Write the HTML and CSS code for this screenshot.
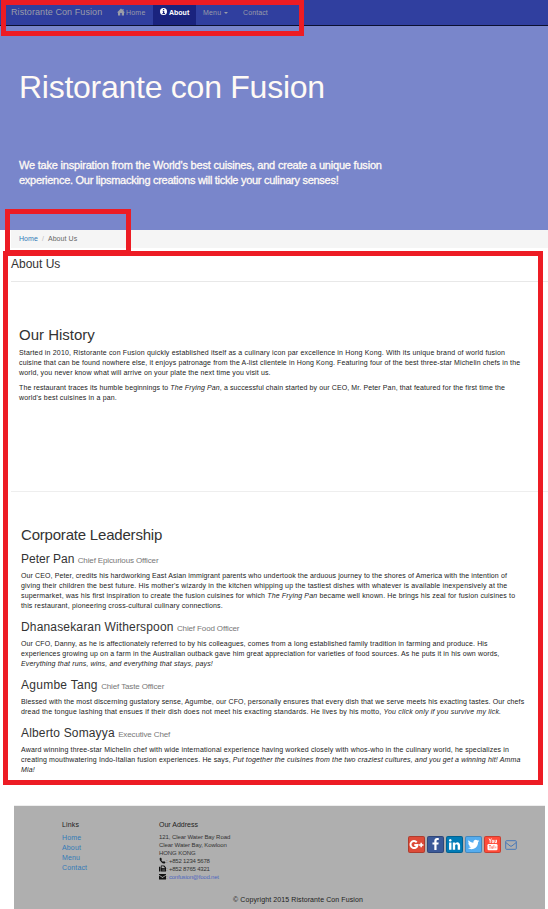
FILE: index.html
```html
<!DOCTYPE html>
<html lang="en">
<head>
<meta charset="utf-8">
<title>Ristorante Con Fusion: About Us</title>
<link rel="stylesheet" href="styles.css">
</head>
<body>
<nav class="navbar">
  <a class="brand">Ristorante Con Fusion</a>
  <a class="nav-home"><svg class="ic-home" viewBox="0 0 16 16"><path d="M8 1 0 9h2v6h4.500v-5h3v5H14V9h2l-3-3V2h-2v2z"/></svg>Home</a>
  <a class="nav-about"><svg class="ic-info" viewBox="0 0 14 14"><path fill-rule="evenodd" d="M7 0a7 7 0 1 0 0 14A7 7 0 0 0 7 0zM6 2h2.500v2.200H6zM5 5.500h3.500V10H10v1.800H4.800V10H6V7.200H5z"/></svg>About</a>
  <a class="nav-menu">Menu<i class="caret"></i></a>
  <a class="nav-contact">Contact</a>
</nav>
<header class="hero">
  <h1>Ristorante con Fusion</h1>
  <p><span class="s1">We take inspiration from the World's best cuisines, and create a unique fusion</span><br><span class="s2">experience. Our lipsmacking creations will tickle your culinary senses!</span></p>
</header>
<main>
  <div class="breadcrumb"><a>Home</a><i>/</i><span>About Us</span></div>
  <h3 class="title">About Us</h3>
  <section class="history">
    <h2>Our History</h2>
    <p><span class="t5">Started in 2010, Ristorante con Fusion quickly established itself as a culinary icon par excellence in Hong Kong. With its unique brand of world fusion</span><br><span class="t2">cuisine that can be found nowhere else, it enjoys patronage from the A-list clientele in Hong Kong. Featuring four of the best three-star Michelin chefs in the</span><br><span class="t3">world, you never know what will arrive on your plate the next time you visit us.</span></p>
    <p><span class="t1">The restaurant traces its humble beginnings to <em>The Frying Pan</em>, a successful chain started by our CEO, Mr. Peter Pan, that featured for the first time the</span><br><span class="t5">world's best cuisines in a pan.</span></p>
  </section>
  <section class="leaders">
    <h2>Corporate Leadership</h2>
    <h3>Peter Pan <small>Chief Epicurious Officer</small></h3>
    <p><span class="t1">Our CEO, Peter, credits his hardworking East Asian immigrant parents who undertook the arduous journey to the shores of America with the intention of</span><br><span class="t5">giving their children the best future. His mother's wizardy in the kitchen whipping up the tastiest dishes with whatever is available inexpensively at the</span><br><span class="t4">supermarket, was his first inspiration to create the fusion cuisines for which <em>The Frying Pan</em> became well known. He brings his zeal for fusion cuisines to</span><br><span class="t4">this restaurant, pioneering cross-cultural culinary connections.</span></p>
    <h3><span class="n1">Dhanasekaran Witherspoon</span> <small>Chief Food Officer</small></h3>
    <p><span class="t3">Our CFO, Danny, as he is affectionately referred to by his colleagues, comes from a long established family tradition in farming and produce. His</span><br><span class="t3">experiences growing up on a farm in the Australian outback gave him great appreciation for varieties of food sources. As he puts it in his own words,</span><br><em class="t4">Everything that runs, wins, and everything that stays, pays!</em></p>
    <h3><span class="n2">Agumbe Tang</span> <small>Chief Taste Officer</small></h3>
    <p><span class="t3">Blessed with the most discerning gustatory sense, Agumbe, our CFO, personally ensures that every dish that we serve meets his exacting tastes. Our chefs</span><br><span class="t6">dread the tongue lashing that ensues if their dish does not meet his exacting standards. He lives by his motto, <em>You click only if you survive my lick.</em></span></p>
    <h3><span class="n1">Alberto Somayya</span> <small>Executive Chef</small></h3>
    <p><span class="t4">Award winning three-star Michelin chef with wide international experience having worked closely with whos-who in the culinary world, he specializes in</span><br><span class="t3">creating mouthwatering Indo-Italian fusion experiences. He says, <em>Put together the cuisines from the two craziest cultures, and you get a winning hit! Amma</em></span><br><em class="t4">Mia!</em></p>
  </section>
</main>
<footer>
  <div class="cols">
    <div class="links"><h5>Links</h5><a>Home</a><a>About</a><a>Menu</a><a>Contact</a></div>
    <div class="address"><h5>Our Address</h5>
      <div>121, Clear Water Bay Road</div><div>Clear Water Bay, Kowloon</div><div>HONG KONG</div>
      <div class="tel"><svg viewBox="0 0 12 12"><path d="M1 2.500 3.300.8 5 3.800 3.800 5.200Q5 7.400 7 8.400L8.300 7l2.900 1.800L9.800 11Q7 12 3.800 8.600T1 2.500z"/></svg>: +852 1234 5678</div>
      <div class="tel"><svg viewBox="0 0 12 12"><path fill-rule="evenodd" d="M0 3h2.500v8H0zM3.300 11V1H9l2 2v1h1v7zM4.500 2.200V5h5V3.500H8V2.200zM5 6.500v1h1v-1zm2 0v1h1v-1zm2 0v1h1v-1zm-4 2v1h1v-1zm2 0v1h1v-1zm2 0v1h1v-1z"/></svg>: +852 8765 4321</div>
      <div class="tel"><svg viewBox="0 0 12 12"><path d="M0 1.500h12v1.300L6 7 0 2.800zM0 4.300 6 8.500l6-4.200V11H0z"/></svg>: <a>confusion@food.net</a></div>
    </div>
    <div class="social">
      <a class="btn google"><svg viewBox="0 0 17 17"><path d="M8.700 6.300A3.500 3.500 0 1 0 9.500 9H6.300" fill="none" stroke="#fff" stroke-width="2"/><path d="M12.400 6.800h1.500v1.500h1.500v1.500h-1.500v1.500h-1.500V9.800h-1.500V8.300h1.500z"/></svg></a>
      <a class="btn facebook"><svg class="fa" viewBox="0 0 1792 1792"><path d="M1343 12v264h-157q-86 0-116 36t-30 108v189h293l-39 296h-254v759h-306v-759h-255v-296h255v-218q0-186 104-288.500t277-102.500q147 0 228 12z"/></svg></a>
      <a class="btn linkedin"><svg class="fa" viewBox="0 0 1792 1792"><path d="M477 625v991h-330v-991h330zm21-306q1 73-50.500 122t-135.500 49h-2q-82 0-132-49t-50-122q0-74 51.500-122.500t134.500-48.500 133 48.500 51 122.500zm1166 729v568h-329v-530q0-105-40.500-164.500t-126.500-59.500q-63 0-105.500 34.500t-63.500 85.500q-11 30-11 81v553h-329q2-399 2-647t-1-296l-1-48h329v144h-2q20-32 41-56t56.500-52 87-43.500 114.500-15.500q171 0 275 113.500t104 332.500z"/></svg></a>
      <a class="btn twitter"><svg class="fa" viewBox="0 0 1792 1792"><path d="M1684 408q-67 98-162 167 1 14 1 42 0 130-38 259.500t-115.500 248.500-184.500 210.500-258 146-323 54.500q-271 0-496-145 35 4 78 4 225 0 401-138-105-2-188-64.500t-114-159.500q33 5 61 5 43 0 85-11-112-23-185.500-111.500t-73.500-205.500v-4q68 38 146 41-66-44-105-115t-39-154q0-88 44-163 121 149 294.500 238.500t371.500 99.500q-8-38-8-74 0-134 94.500-228.500t228.500-94.500q140 0 236 102 109-21 205-78-37 115-142 178 93-10 186-50z"/></svg></a>
      <a class="btn youtube"><svg viewBox="0 0 17 17"><rect x="3.500" y="8" width="10" height="6.200" rx="1.200"/><path d="M5 2.500l1.200 2.300V7M7.400 2.500 6.200 4.800M8.200 4.300h1.400v2.300H8.200zM11 3.800v2.800h1.500V3.800" fill="none" stroke="#fff" stroke-width=".9"/><path d="M4.900 9.500H7M6 9.500v3.300M7.700 10.300v2.100h1v-2.100M9.900 9v3.500M11.800 10.500v1.800" fill="none" stroke="#ff4b39" stroke-width=".6"/></svg></a>
      <svg class="mail" viewBox="0 0 12 10"><path d="M1.500.7h9q.8 0 .8.800v7q0 .8-.8.800h-9q-.8 0-.8-.8v-7q0-.8.800-.8zM.8 2.500 5 5.900q1 .8 2 0l4.200-3.400"/></svg>
    </div>
  </div>
  <p class="copy">© Copyright 2015 Ristorante Con Fusion</p>
</footer>
<div class="mark mark-nav"></div>
<div class="mark mark-crumb"></div>
<div class="mark mark-main"></div>
</body>
</html>
```
FILE: styles.css
```css
* { box-sizing: border-box; }
body { margin: 0; position: relative; width: 548px; height: 909px; overflow: hidden; background: #fff; color: #222; font: 7px/10px "Liberation Sans", Arial, sans-serif; white-space: nowrap; }
h1, h2, h3, h5, p { margin: 0; font-weight: normal; }
i { font-style: normal; }
.navbar { display: flex; height: 26px; background: #303f9f; border-bottom: 1px solid #0b1030; line-height: 25px; color: #9a9da8; }
.navbar a { display: flex; align-items: center; }
.brand { width: 106px; margin-left: 11px; font-size: 9px; letter-spacing: .08px; }
.nav-home { width: 36px; letter-spacing: .2px; }
.nav-about { width: 43px; padding-left: 7px; background: #1a237e; color: #fff; font-weight: bold; }
.nav-menu { width: 47px; padding-left: 7px; letter-spacing: .2px; }
.nav-contact { letter-spacing: .1px; }
.caret { border: 2px solid transparent; border-top-color: #9a9da8; border-bottom: 0; margin-left: 3px; }
.ic-home { width: 8px; height: 8px; fill: #9a9da8; margin-right: 1px; margin-top: -2px; }
.ic-info { width: 7px; height: 7px; fill: #fff; margin-right: 2px; margin-top: -2px; }
.hero { height: 204px; padding: 41px 19px 0; background: #7986cb; color: #fffaf5; }
.hero h1 { height: 91px; font-size: 32px; line-height: 40px; letter-spacing: -.26px; }
.hero p { font-size: 11px; line-height: 15px; -webkit-text-stroke: .3px #fffaf5; }
.s1 { letter-spacing: -.2px; }
.s2 { letter-spacing: -.28px; }
main { height: 575px; padding-left: 11px; }
.breadcrumb { display: flex; height: 18px; padding-left: 8px; background: #f5f5f5; line-height: 18px; color: #666; letter-spacing: .06px; }
.breadcrumb a { color: #337ab7; }
.breadcrumb i { color: #bbb; margin: 0 4px; }
.title { height: 34px; padding-top: 9px; font-size: 12px; line-height: 14px; border-bottom: 1px solid #e8e8e8; color: #333; }
.history { height: 210px; padding: 44px 0 0 8px; border-bottom: 1px solid #eee; }
h2 { font-size: 15px; line-height: 18px; color: #333; }
.history h2 { margin-bottom: 4px; }
.history p { margin-bottom: 5px; }
.leaders { padding: 34px 0 0 10px; }
.leaders h2 { letter-spacing: -.2px; }
.leaders h3 { height: 14px; font-size: 12px; line-height: 14px; color: #333; margin: 9px 0 5px; }
.leaders h2 + h3 { margin-top: 8px; }
small { font-size: 8px; line-height: 1; letter-spacing: -.13px; color: #777; }
/* per-line tracking */
.t1 { letter-spacing: .115px; }
.t2 { letter-spacing: .13px; }
.t3 { letter-spacing: .14px; }
.t4 { letter-spacing: .157px; }
.t5 { letter-spacing: .168px; }
.t6 { letter-spacing: .19px; }
.n1 { letter-spacing: .16px; }
.n2 { letter-spacing: .27px; }
footer { width: 531px; height: 104px; margin-left: 14px; background: #afafaf; border-top: 1px solid #eee; }
.cols { display: flex; height: 89px; padding: 14px 0 0 48px; }
h5 { font-size: 7px; line-height: 10px; margin-bottom: 3px; }
.links { width: 97px; letter-spacing: .15px; }
.links a { display: block; color: #337ab7; }
.address { width: 249px; }
.address div { height: 8px; font-size: 6px; line-height: 8px; letter-spacing: -.08px; color: #333; }
.address .tel { letter-spacing: -.2px; }
.address svg { width: 7px; height: 7px; vertical-align: -1px; fill: #111; }
.address a { color: #5068c0; }
.social { display: flex; gap: 2px; padding-top: 16px; }
.btn { width: 17px; height: 17px; border: 1px solid rgba(0,0,0,.2); border-radius: 2px; display: flex; align-items: center; justify-content: center; }
.btn svg { flex: none; width: 17px; height: 17px; fill: #fff; }
.btn .fa { width: 13px; height: 13px; }
.google { background: #dd4b39; }
.facebook { background: #3b5998; }
.linkedin { background: #007bb6; }
.twitter { background: #55acee; }
.youtube { background: #ff4b39; }
.mail { width: 12px; height: 10px; margin: 4px 0 0 2px; fill: none; stroke: #4878b8; stroke-width: 1; }
.copy { text-align: center; margin-left: 37px; letter-spacing: .1px; }
.mark { position: absolute; border: 5px solid #ed1c24; }
.mark-nav { left: 1px; top: 0; width: 303px; height: 36px; }
.mark-crumb { left: 5px; top: 209px; width: 126px; height: 46px; }
.mark-main { left: 3px; top: 251px; width: 540px; height: 534px; }
```
